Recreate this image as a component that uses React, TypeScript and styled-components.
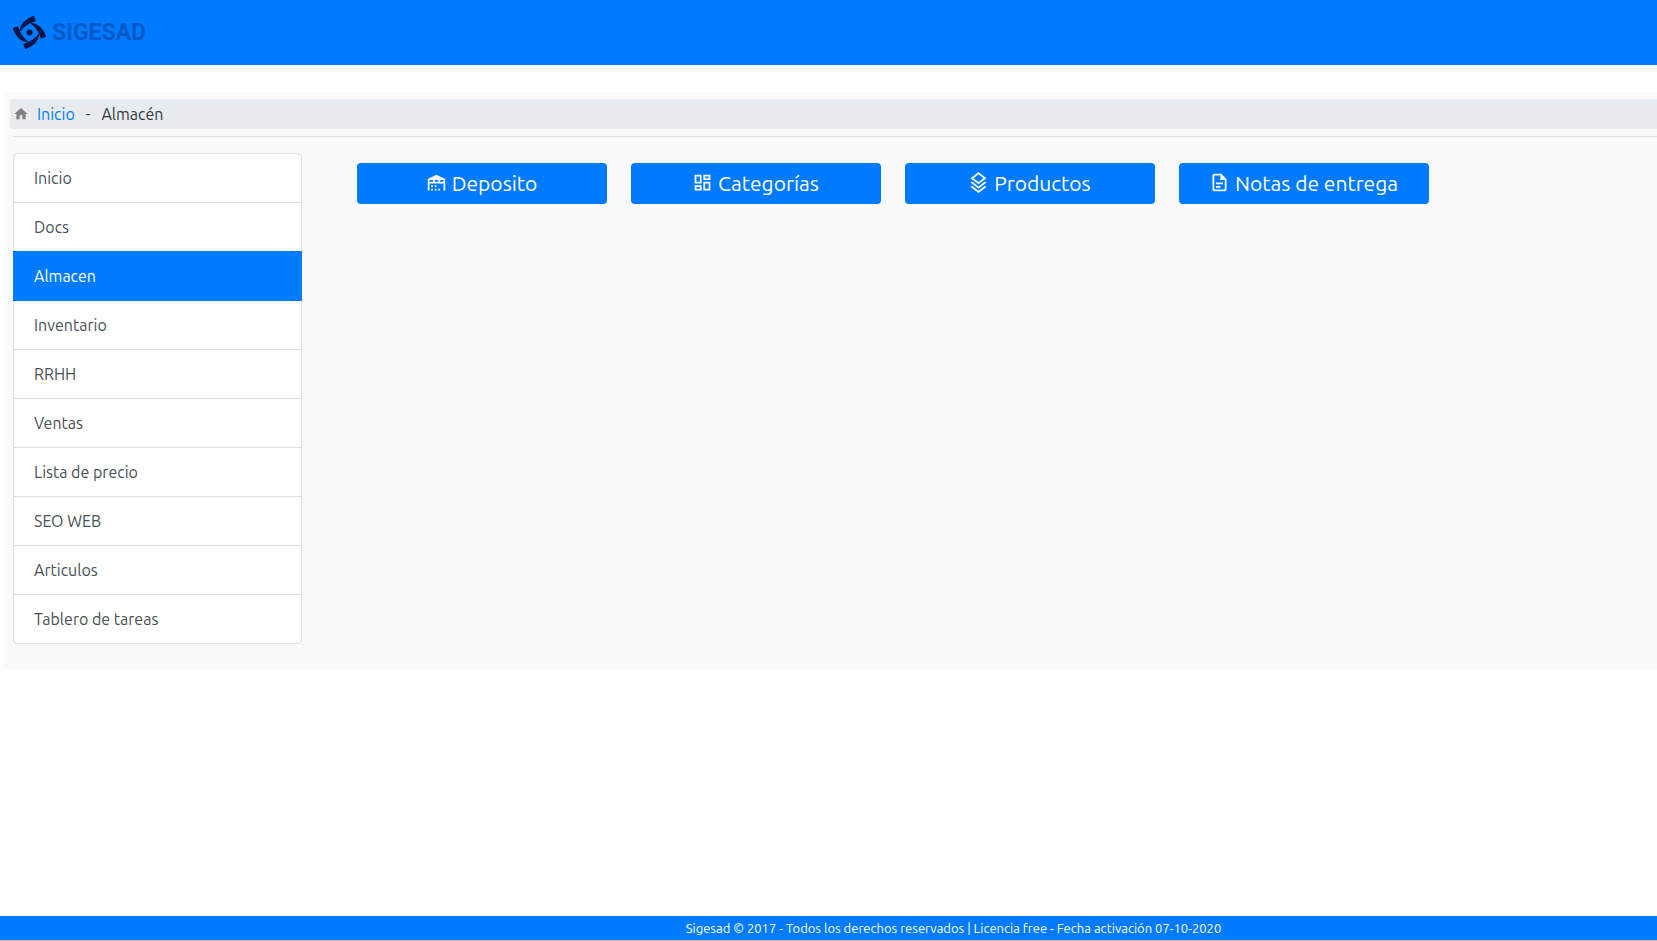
import React from "react";
import styled, { createGlobalStyle } from "styled-components";

const GlobalStyle = createGlobalStyle`
  *, *::before, *::after { box-sizing: border-box; }
  body {
    margin: 0;
    background: #fff;
    color: #343a40;
    font: 400 16px/24px "Ubuntu", "Noto Sans", "Open Sans", sans-serif;
  }
`;

const Page = styled.div`
  display: flex;
  flex-direction: column;
  min-height: 100vh;
`;

const Header = styled.header`
  display: flex;
  align-items: center;
  height: 65px;
  padding: 0 13px;
  background: #007bff;
`;

const Brand = styled.a`
  display: flex;
  align-items: center;
  gap: 6px;
  color: #0459c9;
  font: 700 23px/34px "Roboto", sans-serif;
  text-decoration: none;
`;

const Panel = styled.main`
  margin: 27px 0 0 3px;
  padding: 7px 0 26px 7px;
  background: #fafafa;
`;

const Breadcrumb = styled.nav`
  display: flex;
  align-items: center;
  height: 30px;
  padding: 0 3px;
  border-radius: 4px 0 0 4px;
  background: #e9ecef;
`;

const Crumb = styled.a`
  margin-left: 8px;
  color: #007bff;
  text-decoration: none;
`;

const Separator = styled.span`
  margin: 0 11px;
`;

const Rule = styled.hr`
  margin: 7px 0 16px 3px;
  border: 0;
  border-top: 1px solid #dfdfdf;
`;

const Columns = styled.div`
  display: flex;
  align-items: flex-start;
  gap: 55px;
  padding-left: 3px;
`;

const Menu = styled.nav`
  flex: 0 0 289px;
  border-radius: 4px;
`;

const MenuItem = styled.a<{ $active?: boolean }>`
  display: block;
  position: relative;
  z-index: ${(p) => (p.$active ? 1 : 0)};
  padding: 12px 20px;
  border: 1px solid ${(p) => (p.$active ? "#007bff" : "#dfdfdf")};
  background: ${(p) => (p.$active ? "#007bff" : "#fff")};
  color: ${(p) => (p.$active ? "#fff" : "#495057")};
  text-decoration: none;

  & + & { margin-top: -1px; }
  &:first-child { border-radius: 4px 4px 0 0; }
  &:last-child { border-radius: 0 0 4px 4px; }
`;

const Actions = styled.div`
  display: flex;
  flex-wrap: wrap;
  gap: 24px;
  padding-top: 10px;
`;

const ActionButton = styled.button`
  display: flex;
  align-items: center;
  justify-content: center;
  gap: 5px;
  width: 250px;
  height: 41px;
  padding: 0 1px 2px 0;
  border: 0;
  border-radius: 4px;
  background: #007bff;
  color: #fff;
  font-family: inherit;
  font-size: 21px;
  line-height: 30px;
  cursor: pointer;
`;

const Footer = styled.footer`
  margin-top: auto;
  padding-left: 250px;
  border-bottom: 1px solid #b5b9bd;
  background: #007bff;
  color: #fff;
  font-size: 13px;
  line-height: 24px;
  text-align: center;
`;

const Icon = ({ d, size = 21, color = "currentColor" }: { d: string; size?: number; color?: string }) => (
  <svg width={size} height={size} viewBox="0 0 24 24" fill={color} aria-hidden="true">
    <path d={d} />
  </svg>
);

const home = "M10 20v-6h4v6h5v-8h3L12 3 2 12h3v8z";

const actions = [
  {
    label: "Deposito",
    icon: "M6 19H8V21H6V19M12 3L2 8V21H4V13H20V21H22V8L12 3M8 11H4V9H8V11M14 11H10V9H14V11M20 11H16V9H20V11M6 15H8V17H6V15M10 15H12V17H10V15M10 19H12V21H10V19M14 19H16V21H14V19Z",
  },
  {
    label: "Categorías",
    icon: "M19 5V7H15V5H19M9 5V11H5V5H9M19 13V19H15V13H19M9 17V19H5V17H9M21 3H13V9H21V3M11 3H3V13H11V3M21 11H13V21H21V11M11 15H3V21H11V15Z",
  },
  {
    label: "Productos",
    icon: "M12 0L3 7L12 14L21 7L12 0M12 2.53L17.74 7L12 11.47L6.26 7L12 2.53M19.37 10.73L12 16.47L4.62 10.74L3 12L12 19L21 12L19.37 10.73M19.37 15.73L12 21.47L4.62 15.74L3 17L12 24L21 17L19.37 15.73Z",
  },
  {
    label: "Notas de entrega",
    icon: "M6 2A2 2 0 0 0 4 4V20A2 2 0 0 0 6 22H18A2 2 0 0 0 20 20V8L14 2H6M6 4H13V9H18V20H6V4M8 12V14H16V12H8M8 16V18H13V16H8Z",
  },
];

const menu = [
  "Inicio", "Docs", "Almacen", "Inventario", "RRHH",
  "Ventas", "Lista de precio", "SEO WEB", "Articulos", "Tablero de tareas",
];

const blade = "M4 -16 Q-8 -12 -9.5 -1.5 Q-4 -9 5.5 -11.8Z";

export default function App() {
  return (
    <>
      <GlobalStyle />
      <Page>
        <Header>
          <Brand href="#">
            <svg width="33" height="33" viewBox="-16.5 -16.5 33 33" fill="#06164a" aria-hidden="true">
              {[0, 90, 180, 270].map((a) => (
                <path
                  key={a}
                  d={blade}
                  transform={`rotate(${a})`}
                  stroke="#06164a"
                  strokeWidth="1.2"
                />
              ))}
              <circle r="3" />
            </svg>
            SIGESAD
          </Brand>
        </Header>
        <Panel>
          <Breadcrumb aria-label="Ruta">
            <Icon d={home} size={16} color="#808080" />
            <Crumb href="#">Inicio</Crumb>
            <Separator>-</Separator>
            <span>Almacén</span>
          </Breadcrumb>
          <Rule />
          <Columns>
            <Menu aria-label="Menú">
              {menu.map((m) => (
                <MenuItem key={m} href="#" $active={m === "Almacen"}>{m}</MenuItem>
              ))}
            </Menu>
            <Actions>
              {actions.map((a) => (
                <ActionButton key={a.label} type="button">
                  <Icon d={a.icon} />
                  {a.label}
                </ActionButton>
              ))}
            </Actions>
          </Columns>
        </Panel>
        <Footer>
          Sigesad © 2017 - Todos los derechos reservados | Licencia free - Fecha activación 07-10-2020
        </Footer>
      </Page>
    </>
  );
}
